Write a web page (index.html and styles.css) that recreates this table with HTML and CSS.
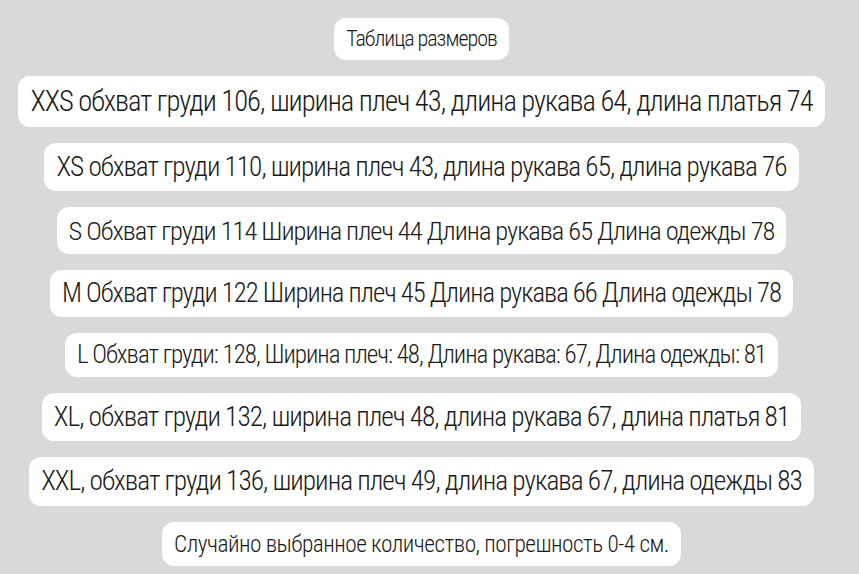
FILE: index.html
```html
<!DOCTYPE html>
<html lang="ru">
<head>
<meta charset="utf-8">
<title>Таблица размеров</title>
<link rel="stylesheet" href="styles.css">
</head>
<body>
<main class="sheet">
  <div class="pill pill-title">Таблица размеров</div>
  <div class="pill row row-xxs">XXS обхват груди 106, ширина плеч 43, длина рукава 64, длина платья 74</div>
  <div class="pill row row-xs">XS обхват груди 110, ширина плеч 43, длина рукава 65, длина рукава 76</div>
  <div class="pill row row-s">S Обхват груди 114 Ширина плеч 44 Длина рукава 65 Длина одежды 78</div>
  <div class="pill row row-m">M Обхват груди 122 Ширина плеч 45 Длина рукава 66 Длина одежды 78</div>
  <div class="pill row row-l">L Обхват груди: 128, Ширина плеч: 48, Длина рукава: 67, Длина одежды: 81</div>
  <div class="pill row row-xl">XL, обхват груди 132, ширина плеч 48, длина рукава 67, длина платья 81</div>
  <div class="pill row row-xxl">XXL, обхват груди 136, ширина плеч 49, длина рукава 67, длина одежды 83</div>
  <div class="pill pill-note">Случайно выбранное количество, погрешность 0-4 см.</div>
</main>
</body>
</html>
```
FILE: styles.css
```css
html, body {
  margin: 0;
  padding: 0;
  background: #d9d9d9;
}

.sheet {
  box-sizing: border-box;
  width: 859px;
  height: 574px;
  padding: 18px 16px 0 0;
  display: flex;
  flex-direction: column;
  align-items: center;
  gap: 16px;
  font-family: Roboto, "Roboto Condensed", sans-serif;
  font-stretch: 75%;
  font-weight: 300;
  color: #1a1a1a;
}

.pill {
  background: #ffffff;
  border-radius: 12px;
  white-space: nowrap;
  padding: 8px 12px;
}

.pill-title {
  font-size: 22px;
  line-height: 26px;
  letter-spacing: -1px;
}

.row {
  letter-spacing: -1px;
}

.row-xxs { font-size: 28.57px; line-height: 35px; }
.row-xs  { font-size: 27.3px;  line-height: 32px; }
.row-s   { font-size: 26.5px;  line-height: 31px; }
.row-m   { font-size: 26.74px; line-height: 31px; }
.row-l   { font-size: 25.03px; line-height: 28px; }
.row-xl  { font-size: 27.37px; line-height: 32px; }
.row-xxl { font-size: 27.37px; line-height: 33px; }

.pill-note {
  font-size: 23.3px;
  line-height: 28px;
  letter-spacing: -0.5px;
}
```
